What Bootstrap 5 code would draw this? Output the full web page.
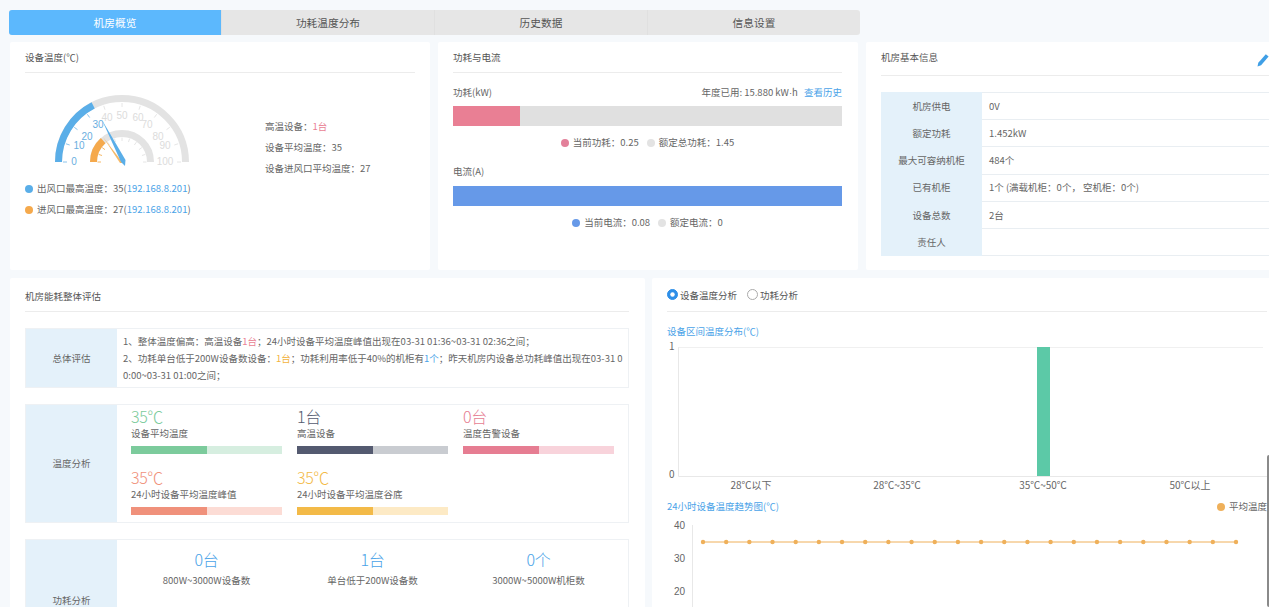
<!DOCTYPE html>
<html lang="zh-CN">

<head>
    <meta charset="UTF-8">
    <meta name="viewport" content="width=device-width, initial-scale=1.0">
    <title>机房概览</title>
    <link href="https://cdn.jsdelivr.net/npm/bootstrap@5.3.2/dist/css/bootstrap.min.css" rel="stylesheet">
    <style>
        html, body { height: 100%; overflow: hidden; }
        body {
            background: #f6f9fc;
            color: #666;
            font-family: "Noto Sans CJK SC", "Liberation Sans", sans-serif;
            font-size: 9.5px;
            line-height: 1.3;
        }
        .page-wrap { width: 1500px; padding: 10px 0 0 9px; }
        .tab-bar { width: 851px; height: 25px; background: #e6e6e6; border-radius: 3px; overflow: hidden; }
        .tab-item { flex: 1; line-height: 25px; text-align: center; font-size: 10.7px; color: #555; border-left: 1px solid #e0e0e0; }
        .tab-item.on { background: #5cb8fd; color: #fff; border-left: 0; }
        .panel { background: #fff; border-radius: 2px; flex: none; }
        .top-row { margin: 7px 0 0 1px; gap: 8px; height: 228px; }
        .bottom-row { margin: 8px 0 0 1px; gap: 7px; }
        .panel-a { width: 420px; padding: 0 15px; }
        .panel-b { width: 420px; padding: 0 16px 0 15px; }
        .panel-c { width: 420px; padding: 0 15px; }
        .panel-d { width: 635px; height: 400px; padding: 0 16px 0 15px; }
        .panel-e { width: 630px; height: 400px; padding: 0 15px; }
        .panel-head { height: 31px; line-height: 30px; border-bottom: 1px solid #ececec; color: #555; }
        .panel-c .panel-head { height: 34px; }
        .panel-d .panel-head, .panel-e .panel-head { height: 34px; line-height: 36px; }
        .gauge-col { width: 200px; padding-top: 16px; }
        .gauge-svg { display: block; margin-left: 22px; }
        .dot { display: inline-block; width: 8px; height: 8px; border-radius: 50%; margin-right: 4px; vertical-align: -0.5px; }
        .legend-line { height: 21px; line-height: 21px; white-space: nowrap; }
        .link-blue { color: #4aa3e8; }
        .stat-col { margin-left: 40px; padding-top: 43px; }
        .stat-col div { height: 21px; line-height: 21px; }
        .txt-red { color: #e97f94; }
        .txt-orange { color: #f2b340; }
        .latin-dot { font-family: "Liberation Sans", sans-serif; }
        .bar-head { height: 14px; margin-top: 13px; }
        .flat-bar { height: 20px; background: #e0e0e0; border-radius: 0; margin-top: 6px; }
        .flat-bar.second { margin-top: 9px; }
        .bar-pink { background: #e97f94; }
        .bar-blue { background: #6699e8; }
        .bar-legend { text-align: center; margin-top: 10px; height: 14px; }
        .bar-legend span + .dot { margin-left: 8px; }
        .mt-group { margin-top: 15px; }
        .edit-icon { position: absolute; right: 0; top: 11px; }
        .info-table { width: 100%; margin: 16px 0 0; table-layout: fixed; }
        .info-table td { height: 27.2px; padding: 0 7px; border-top: 1px solid #e9eef2; border-bottom: 1px solid #e9eef2; vertical-align: middle; color: #666; }
        .info-table td.lbl { width: 101px; background: #e4f1fa; text-align: center; border-color: #e4f1fa; padding: 0; }
        .eval-row { border: 1px solid #eef1f4; margin-top: 16px; display: flex; }
        .eval-label { width: 91px; flex: none; background: #e4f1fa; display: flex; align-items: center; justify-content: center; }
        .eval-text { padding: 4px 6px; line-height: 17px; height: 58px; overflow: hidden; white-space: nowrap; }
        .eval-grid { display: grid; grid-template-columns: repeat(3, 151px); column-gap: 15px; padding: 0 0 0 14px; height: 117px; align-content: start; }
        .big-num { font-size: 16px; font-weight: 300; letter-spacing: -0.4px; line-height: 22px; height: 22px; }
        .small-lbl { line-height: 13px; height: 13px; }
        .pair-bar { height: 8px; margin: 6px 0 11.5px; border-radius: 0; background: #d6eee0; }
        .pc-green { background: #7ccb9c; }
        .pc-dark { background: #545a70; }
        .bg-dark-soft { background: #c9ccd1; }
        .pc-pink { background: #e67d92; }
        .bg-pink-soft { background: #f8d3db; }
        .pc-salmon { background: #f0917b; }
        .bg-salmon-soft { background: #fcdcd5; }
        .pc-amber { background: #f3ba48; }
        .bg-amber-soft { background: #fdeac5; }
        .power-cell { text-align: center; padding-top: 8px; }
        .power-cell .big-num { color: #4aa3e8; }
        .power-cell .small-lbl { margin-top: 4px; }
        .power-row { height: 122px; }
        .radio-row { height: 100%; align-items: center; gap: 10px; }
        .form-check-input.tiny-radio { width: 11px; height: 11px; margin: 0 2px 0 0; float: none; flex: none; border-color: #aaa; }
        .form-check-input.tiny-radio:checked { background-color: #2e8fe8; border-color: #2e8fe8; }
        .chart-title { color: #4aa3e8; height: 14px; line-height: 14px; }
        .chart-svg { display: block; }
        .scroll-thumb { position: fixed; right: 0; top: 455px; width: 2px; height: 152px; background: #8a8a8a; border-radius: 2px 0 0 2px; }
    </style>
</head>

<body>
    <div class="page-wrap">
        <!-- tabs -->
        <div class="tab-bar d-flex">
            <div class="tab-item on">机房概览</div>
            <div class="tab-item">功耗温度分布</div>
            <div class="tab-item">历史数据</div>
            <div class="tab-item">信息设置</div>
        </div>

        <!-- top row -->
        <div class="top-row d-flex">
            <div class="panel panel-a">
                <div class="panel-head">设备温度(℃)</div>
                <div class="d-flex">
                    <div class="gauge-col">
                        <svg class="gauge-svg" id="gauge" width="150" height="85" viewBox="0 0 150 85">
                            <g fill="none" stroke-width="7">
                                <path d="M11.5 73A63.5 63.5 0 0 1 138.5 73" stroke="#e3e3e3"/>
                                <path d="M11.5 73A63.5 63.5 0 0 1 46.17 16.42" stroke="#5aaee8"/>
                                <path d="M46.5 73A28.5 28.5 0 0 1 103.5 73" stroke="#e3e3e3"/>
                                <path d="M46.5 73A28.5 28.5 0 0 1 56.16 51.6" stroke="#f5a94c"/>
                            </g>
                            <g id="ticks"></g>
                            <g font-size="10" text-anchor="middle" dominant-baseline="central" font-family="Liberation Sans, sans-serif">
                                <g fill="#6aaee0">
                                    <text x="27" y="72">0</text>
                                    <text x="32" y="56">10</text>
                                    <text x="40" y="47">20</text>
                                    <text x="51" y="35">30</text>
                                </g>
                                <g fill="#dcdcdc">
                                    <text x="60" y="28">40</text>
                                    <text x="75" y="26">50</text>
                                    <text x="91" y="28">60</text>
                                    <text x="100" y="35">70</text>
                                    <text x="111" y="47">80</text>
                                    <text x="118" y="56">90</text>
                                    <text x="118" y="72">100</text>
                                </g>
                            </g>
                            <polygon points="56,48 76,74 73,74" fill="#f5b968"/>
                            <polygon points="55,31 78.5,71 78,77 74,73" fill="#5aaee8"/>
                        </svg>
                        <div class="legend-line mt-1"><span class="dot" style="background:#5aaee8"></span>出风口最高温度：35(<span class="link-blue">192.168.8.201</span>)</div>
                        <div class="legend-line"><span class="dot" style="background:#f5a94c"></span>进风口最高温度：27(<span class="link-blue">192.168.8.201</span>)</div>
                    </div>
                    <div class="stat-col">
                        <div>高温设备：<span class="txt-red">1台</span></div>
                        <div>设备平均温度：35</div>
                        <div>设备进风口平均温度：27</div>
                    </div>
                </div>
            </div>

            <div class="panel panel-b">
                <div class="panel-head">功耗与电流</div>
                <div class="bar-head d-flex justify-content-between">
                    <span>功耗(kW)</span>
                    <span>年度已用: 15.880 kW<span class="latin-dot">·</span>h <span class="link-blue ms-1">查看历史</span></span>
                </div>
                <div class="progress flat-bar">
                    <div class="progress-bar bar-pink" style="width:17.3%"></div>
                </div>
                <div class="bar-legend"><span class="dot" style="background:#e3809a"></span><span>当前功耗：0.25</span><span class="dot" style="background:#e3e3e3"></span><span>额定总功耗：1.45</span></div>
                <div class="mt-group">电流(A)</div>
                <div class="progress flat-bar second">
                    <div class="progress-bar bar-blue" style="width:100%"></div>
                </div>
                <div class="bar-legend"><span class="dot" style="background:#6699e8"></span><span>当前电流：0.08</span><span class="dot" style="background:#e3e3e3"></span><span>额定电流：0</span></div>
            </div>

            <div class="panel panel-c">
                <div class="panel-head position-relative" style="width:388px">机房基本信息
                    <svg class="edit-icon" width="12" height="14" viewBox="0 0 12 14">
                        <path d="M0.5 13.5L1.3 9.8 8.8 1.2 11.6 3.6 4.1 12.2Z" fill="#3f9fe6"/>
                    </svg>
                </div>
                <table class="info-table">
                    <tr><td class="lbl">机房供电</td><td>0V</td></tr>
                    <tr><td class="lbl">额定功耗</td><td>1.452kW</td></tr>
                    <tr><td class="lbl">最大可容纳机柜</td><td>484个</td></tr>
                    <tr><td class="lbl">已有机柜</td><td>1个 (满载机柜：0个， 空机柜：0个)</td></tr>
                    <tr><td class="lbl">设备总数</td><td>2台</td></tr>
                    <tr><td class="lbl">责任人</td><td></td></tr>
                </table>
            </div>
        </div>

        <!-- bottom row -->
        <div class="bottom-row d-flex">
            <div class="panel panel-d">
                <div class="panel-head">机房能耗整体评估</div>
                <div class="eval-row">
                    <div class="eval-label">总体评估</div>
                    <div class="eval-text">
                        1、整体温度偏高：高温设备<span class="txt-red">1台</span>；24小时设备平均温度峰值出现在03-31 01:36~03-31 02:36之间；<br>
                        2、功耗单台低于200W设备数设备：<span class="txt-orange">1台</span>；功耗利用率低于40%的机柜有<span class="link-blue">1个</span>；昨天机房内设备总功耗峰值出现在03-31 0<br>
                        0:00~03-31 01:00之间；
                    </div>
                </div>
                <div class="eval-row">
                    <div class="eval-label">温度分析</div>
                    <div class="eval-grid">
                        <div>
                            <div class="big-num" style="color:#7ccb9c">35℃</div>
                            <div class="small-lbl">设备平均温度</div>
                            <div class="progress pair-bar"><div class="progress-bar pc-green" style="width:50%"></div></div>
                        </div>
                        <div>
                            <div class="big-num" style="color:#545a70">1台</div>
                            <div class="small-lbl">高温设备</div>
                            <div class="progress pair-bar bg-dark-soft"><div class="progress-bar pc-dark" style="width:50%"></div></div>
                        </div>
                        <div>
                            <div class="big-num" style="color:#e67d92">0台</div>
                            <div class="small-lbl">温度告警设备</div>
                            <div class="progress pair-bar bg-pink-soft"><div class="progress-bar pc-pink" style="width:50%"></div></div>
                        </div>
                        <div>
                            <div class="big-num" style="color:#f0917b">35℃</div>
                            <div class="small-lbl">24小时设备平均温度峰值</div>
                            <div class="progress pair-bar bg-salmon-soft"><div class="progress-bar pc-salmon" style="width:50%"></div></div>
                        </div>
                        <div>
                            <div class="big-num" style="color:#f3ba48">35℃</div>
                            <div class="small-lbl">24小时设备平均温度谷底</div>
                            <div class="progress pair-bar bg-amber-soft"><div class="progress-bar pc-amber" style="width:50%"></div></div>
                        </div>
                    </div>
                </div>
                <div class="eval-row power-row">
                    <div class="eval-label">功耗分析</div>
                    <div class="eval-grid">
                        <div class="power-cell"><div class="big-num">0台</div><div class="small-lbl">800W~3000W设备数</div></div>
                        <div class="power-cell"><div class="big-num">1台</div><div class="small-lbl">单台低于200W设备数</div></div>
                        <div class="power-cell"><div class="big-num">0个</div><div class="small-lbl">3000W~5000W机柜数</div></div>
                    </div>
                </div>
            </div>

            <div class="panel panel-e">
                <div class="panel-head">
                    <div class="d-flex radio-row">
                        <label class="d-flex align-items-center"><input class="form-check-input tiny-radio" type="radio" name="mode" checked>设备温度分析</label>
                        <label class="d-flex align-items-center"><input class="form-check-input tiny-radio" type="radio" name="mode">功耗分析</label>
                    </div>
                </div>
                <div class="chart-title" style="margin-top:12px">设备区间温度分布(℃)</div>
                <svg class="chart-svg" width="620" height="154" viewBox="0 0 620 154">
                    <g stroke="#e8e8e8" fill="none">
                        <path d="M11.5 9V138.5H600"/>
                        <path d="M11.5 9.5H596" stroke="#f0f0f0"/>
                    </g>
                    <rect x="370" y="9" width="13" height="129" fill="#5cc9a7"/>
                    <g font-size="10" fill="#666" font-family="Noto Sans CJK SC, sans-serif">
                        <text x="2" y="12">1</text>
                        <text x="2" y="140">0</text>
                        <g text-anchor="middle">
                            <text x="84" y="151">28℃以下</text>
                            <text x="230" y="151">28℃~35℃</text>
                            <text x="376" y="151">35℃~50℃</text>
                            <text x="523" y="151">50℃以上</text>
                        </g>
                    </g>
                </svg>
                <div class="d-flex justify-content-between chart-title" style="margin-top:7px;width:600px">
                    <span>24小时设备温度趋势图(℃)</span>
                    <span style="color:#666"><span class="dot" style="background:#efb05a"></span>平均温度</span>
                </div>
                <svg class="chart-svg" id="trend" width="620" height="100" viewBox="0 0 620 100">
                    <path d="M25.5 12V100" stroke="#e8e8e8" fill="none"/>
                    <g font-size="10" fill="#666" font-family="Liberation Sans, sans-serif">
                        <text x="7" y="16">40</text>
                        <text x="7" y="49">30</text>
                        <text x="7" y="82">20</text>
                    </g>
                    <path d="M36 29H569" stroke="#efb05a" stroke-width="1" fill="none"/>
                    <g id="points" fill="#efb05a"></g>
                </svg>
            </div>
        </div>
    </div>
    <div class="scroll-thumb"></div>

    <script src="https://cdn.jsdelivr.net/npm/bootstrap@5.3.2/dist/js/bootstrap.bundle.min.js"></script>
    <script>
        const NS = 'http://www.w3.org/2000/svg';

        // gauge tick marks
        const ticks = document.getElementById('ticks');
        function addTick(r1, r2, pct, color) {
            const a = Math.PI * pct;
            const line = document.createElementNS(NS, 'line');
            line.setAttribute('x1', 75 - r1 * Math.cos(a));
            line.setAttribute('y1', 73 - r1 * Math.sin(a));
            line.setAttribute('x2', 75 - r2 * Math.cos(a));
            line.setAttribute('y2', 73 - r2 * Math.sin(a));
            line.setAttribute('stroke', color);
            ticks.appendChild(line);
        }
        for (let i = 0; i <= 10; i++) {
            addTick(59, 55, i / 10, i <= 3 ? '#8cc4ec' : '#e6e6e6');
            addTick(24.5, 21, i / 10, i <= 2 ? '#f5b968' : '#e6e6e6');
        }

        // 24 hour trend points
        const points = document.getElementById('points');
        for (let i = 0; i < 24; i++) {
            const c = document.createElementNS(NS, 'circle');
            c.setAttribute('cx', 36 + i * 533 / 23);
            c.setAttribute('cy', 29);
            c.setAttribute('r', 2.2);
            points.appendChild(c);
        }
    </script>
</body>

</html>
